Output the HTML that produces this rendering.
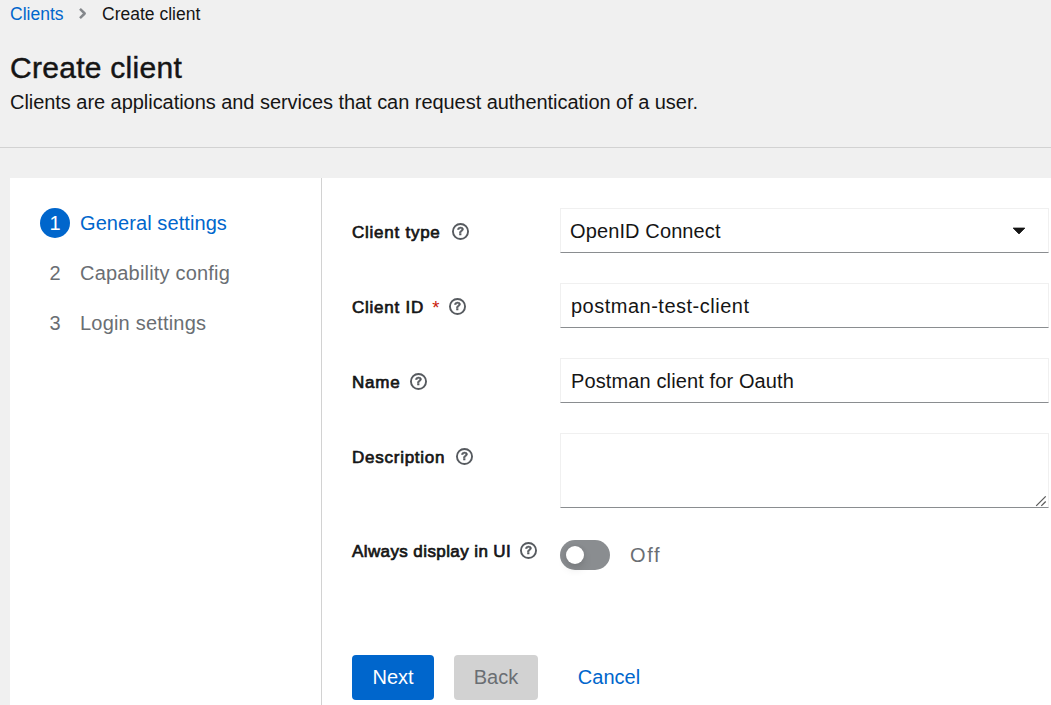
<!DOCTYPE html>
<html lang="en">
<head>
<meta charset="utf-8">
<title>Create client</title>
<style>
  html, body { margin: 0; padding: 0; }
  body {
    width: 1051px; height: 705px; overflow: hidden; position: relative;
    background: #f0f0f0; color: #151515;
    font-family: "Liberation Sans", sans-serif; font-size: 20px; line-height: 30px;
  }
  .abs { position: absolute; white-space: nowrap; }
  a { color: #0066cc; text-decoration: none; }

  /* breadcrumb */
  .crumb { font-size: 17.5px; line-height: 26px; top: 1px; }
  /* header */
  h1 { margin: 0; font-weight: 400; font-size: 30px; line-height: 39px; letter-spacing: 0.28px; -webkit-text-stroke: 0.45px #151515; }
  .divider { left: 0; top: 147px; width: 1051px; height: 1px; background: #d2d2d2; }

  /* panel */
  .panel { left: 10px; top: 178px; width: 1041px; height: 527px; background: #fff; }
  .navborder { left: 321px; top: 178px; width: 1px; height: 527px; background: #d2d2d2; }

  /* wizard nav */
  .step { left: 80px; font-size: 20px; line-height: 30px; color: #6a6e73; }
  .step.cur { color: #0066cc; }
  .num { left: 40px; width: 30px; height: 30px; border-radius: 15px; text-align: center;
         font-size: 20px; line-height: 30px; color: #6a6e73; }
  .num.cur { background: #0066cc; color: #fff; }

  /* form */
  .lbl { left: 352px; font-size: 17px; letter-spacing: 0.75px; line-height: 26px; font-weight: 400; -webkit-text-stroke: 0.68px #151515; color: #151515; }
  .req { color: #c9190b; font-weight: 400; }
  .help { width: 19px; height: 19px; will-change: transform; }
  .field { left: 560px; width: 489px; box-sizing: border-box; background: #fff;
           border: 1px solid #f0f0f0; border-bottom: 1px solid #8a8d90; }
  .field span { position: absolute; left: 10px; top: 7px; font-size: 20px; line-height: 30px; color: #151515; }

  /* switch */
  .toggle { left: 560px; top: 540px; width: 50px; height: 30px; border-radius: 15px; background: #8a8d90; }
  .knob { left: 566px; top: 546.2px; width: 17.5px; height: 17.5px; border-radius: 9px; background: #fff;
          box-shadow: 0 5px 10px 0 rgba(3,3,3,.12), 0 0 5px 0 rgba(3,3,3,.06); }
  .off { left: 630px; top: 540px; font-size: 20px; line-height: 30px; color: #6a6e73; letter-spacing: 1.6px; }

  /* buttons */
  .btn { top: 655px; height: 45px; border-radius: 4px; font-size: 20px; line-height: 45px; text-align: center;
         border: 0; padding: 0; margin: 0; font-family: inherit; box-sizing: border-box; display: block; }
  .next { left: 352px; width: 82px; background: #0066cc; color: #fff; }
  .back { left: 454px; width: 84px; background: #d2d2d2; color: #6a6e73; }
  .cancel { left: 558px; width: 102px; color: #0066cc; }
</style>
</head>
<body>

<!-- breadcrumb -->
<nav>
  <a class="abs crumb" style="left:10px;" href="#">Clients</a>
  <svg class="abs" style="left:78px; top:7px;" width="10" height="13" viewBox="0 0 10 13"><path d="M2 1.9 L6.7 6.5 L2 11.1" fill="none" stroke="#84878b" stroke-width="2.5" stroke-linejoin="round"/></svg>
  <span class="abs crumb" style="left:102px;">Create client</span>
</nav>

<!-- header -->
<h1 class="abs" style="left:10px; top:48px;">Create client</h1>
<p class="abs" style="left:10px; top:87px; margin:0; letter-spacing:-0.045px;">Clients are applications and services that can request authentication of a user.</p>
<div class="abs divider"></div>

<!-- wizard panel -->
<div class="abs panel"></div>
<div class="abs navborder"></div>

<div class="abs num cur" style="top:208px;">1</div>
<div class="abs step cur" style="top:208px; letter-spacing:0.08px;">General settings</div>
<div class="abs num" style="top:258px;">2</div>
<div class="abs step" style="top:258px; letter-spacing:0.19px;">Capability config</div>
<div class="abs num" style="top:308px;">3</div>
<div class="abs step" style="top:308px; letter-spacing:0.2px;">Login settings</div>

<!-- form -->
<label class="abs lbl" style="top:220px;">Client type</label>
<svg aria-hidden="true" class="abs help" style="left:451.0px; top:221.6px;" width="19" height="19" viewBox="0 0 19 19"><circle cx="9.5" cy="9.5" r="7.55" fill="none" stroke="#565a5f" stroke-width="1.9"/><text x="9.6" y="13.3" text-anchor="middle" style="font:700 11.5px 'Liberation Sans',sans-serif;" fill="#565a5f" stroke="#565a5f" stroke-width="0.5">?</text></svg>
<div class="abs field" style="top:208px; height:45px;"><span style="left:9px; letter-spacing:0.12px;">OpenID Connect</span></div>
<svg class="abs" style="left:1012px; top:227px;" width="14" height="8" viewBox="0 0 14 8"><path d="M1.2 1.1 H12.8 L7 6.9 Z" fill="#151515" stroke="#151515" stroke-width="0.9" stroke-linejoin="round"/></svg>

<label class="abs lbl" style="top:295px;">Client ID</label>
<span class="abs req" style="left:432.3px; top:294.5px; font-size:18.5px; line-height:26px;">*</span>
<svg aria-hidden="true" class="abs help" style="left:448.2px; top:296.6px;" width="19" height="19" viewBox="0 0 19 19"><circle cx="9.5" cy="9.5" r="7.55" fill="none" stroke="#565a5f" stroke-width="1.9"/><text x="9.6" y="13.3" text-anchor="middle" style="font:700 11.5px 'Liberation Sans',sans-serif;" fill="#565a5f" stroke="#565a5f" stroke-width="0.5">?</text></svg>
<div class="abs field" style="top:283px; height:45px;"><span style="letter-spacing:0.5px;">postman-test-client</span></div>

<label class="abs lbl" style="top:370px;">Name</label>
<svg aria-hidden="true" class="abs help" style="left:409.0px; top:371.6px;" width="19" height="19" viewBox="0 0 19 19"><circle cx="9.5" cy="9.5" r="7.55" fill="none" stroke="#565a5f" stroke-width="1.9"/><text x="9.6" y="13.3" text-anchor="middle" style="font:700 11.5px 'Liberation Sans',sans-serif;" fill="#565a5f" stroke="#565a5f" stroke-width="0.5">?</text></svg>
<div class="abs field" style="top:358px; height:45px;"><span style="letter-spacing:0.12px;">Postman client for Oauth</span></div>

<label class="abs lbl" style="top:445px;">Description</label>
<svg aria-hidden="true" class="abs help" style="left:454.8px; top:446.6px;" width="19" height="19" viewBox="0 0 19 19"><circle cx="9.5" cy="9.5" r="7.55" fill="none" stroke="#565a5f" stroke-width="1.9"/><text x="9.6" y="13.3" text-anchor="middle" style="font:700 11.5px 'Liberation Sans',sans-serif;" fill="#565a5f" stroke="#565a5f" stroke-width="0.5">?</text></svg>
<div class="abs field" style="top:433px; height:75px;"></div>
<svg class="abs" style="left:1034px; top:494px;" width="13" height="13" viewBox="0 0 13 13"><path d="M2.2 11.9 L11.7 2.4 M7.3 11.9 L11.7 7.5" fill="none" stroke="#5c5c5c" stroke-width="1.3"/></svg>

<label class="abs lbl" style="top:539px; letter-spacing:0.4px;">Always display in UI</label>
<svg aria-hidden="true" class="abs help" style="left:518.8px; top:541px;" width="19" height="19" viewBox="0 0 19 19"><circle cx="9.5" cy="9.5" r="7.55" fill="none" stroke="#565a5f" stroke-width="1.9"/><text x="9.6" y="13.3" text-anchor="middle" style="font:700 11.5px 'Liberation Sans',sans-serif;" fill="#565a5f" stroke="#565a5f" stroke-width="0.5">?</text></svg>
<div class="abs toggle"></div>
<div class="abs knob"></div>
<div class="abs off">Off</div>

<!-- buttons -->
<button type="button" class="abs btn next">Next</button>
<button type="button" class="abs btn back" disabled>Back</button>
<a class="abs btn cancel" href="#">Cancel</a>

</body>
</html>
